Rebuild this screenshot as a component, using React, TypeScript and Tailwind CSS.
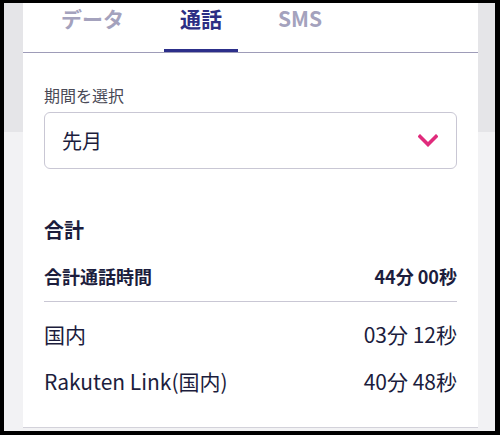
import { useState } from 'react'

const tabs = ['データ', '通話', 'SMS']

const rows = [
  { label: '国内', value: '03分 12秒' },
  { label: 'Rakuten Link(国内)', value: '40分 48秒' },
]

export default function App() {
  const [active, setActive] = useState(1)

  return (
    <div
      className="h-[435px] w-[500px] overflow-hidden bg-black pl-[4px] pt-[3px]"
      style={{ fontFamily: '"Noto Sans CJK JP", "Noto Sans", sans-serif' }}
    >
      <div className="h-[428px] w-[491px] bg-[linear-gradient(to_bottom,#e5e5e8_129px,#f2f2f4_129px)] pl-[19px]">
        <div className="h-[425px] w-[455px] border-b border-[#d3d2da] bg-white">
          {/* tabs */}
          <div className="flex h-[50px] gap-[24px] border-b border-[#9e9cb8] pl-[22px]">
            {tabs.map((tab, i) => (
              <button
                key={tab}
                onClick={() => setActive(i)}
                className={
                  i === active
                    ? 'flex h-[49px] items-start border-b-[3px] border-[#2c2f8a] px-4 pt-[1px] text-[21px] font-bold leading-[28px] text-[#2c2e84]'
                    : 'flex h-[49px] items-start px-4 pt-[1px] text-[21px] font-bold leading-[28px] text-[#a4a2bd]'
                }
              >
                {tab}
              </button>
            ))}
          </div>

          <div className="px-[21px] pt-[31px] text-[#1c1d3d]">
            <p className="text-[16px] leading-[22px] text-[#4a4a56]">期間を選択</p>
            <div className="mt-[6px] flex h-[57px] items-center justify-between rounded-[6px] border border-[#c9c7d4] pl-[17px] pr-[18px]">
              <span className="text-[20px] leading-[28px]">先月</span>
              <svg width="20" height="13" viewBox="0 0 20 13" fill="none">
                <polyline
                  points="2,2.5 10,10.5 18,2.5"
                  stroke="#e02b7c"
                  strokeWidth="3.6"
                  strokeLinecap="square"
                  strokeLinejoin="miter"
                />
              </svg>
            </div>

            <h2 className="mt-[47px] text-[20px] font-bold leading-[28px]">合計</h2>

            <div className="mt-[19px] flex justify-between border-b border-[#c9c7d4] pb-[12px] text-[18px] font-bold leading-[26px]">
              <span>合計通話時間</span>
              <span>44分 00秒</span>
            </div>

            <div className="mt-[18px] flex flex-col gap-[19px]">
              {rows.map(({ label, value }) => (
                <div key={label} className="flex justify-between text-[21px] leading-[28px]">
                  <span>{label}</span>
                  <span>{value}</span>
                </div>
              ))}
            </div>
          </div>
        </div>
      </div>
    </div>
  )
}
